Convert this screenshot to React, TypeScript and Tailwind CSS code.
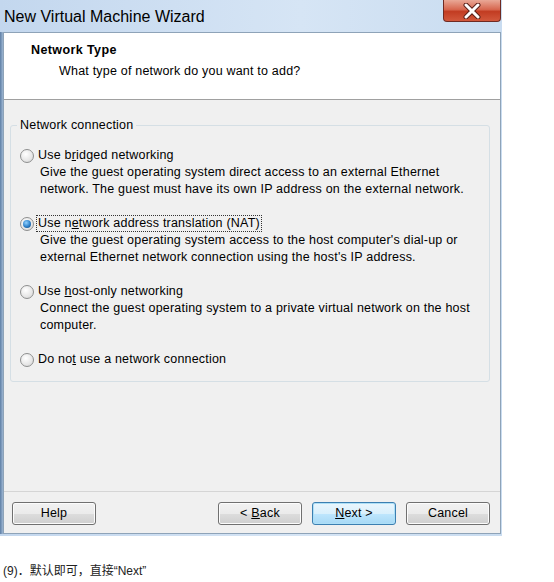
import type { ReactNode } from 'react';

const Radio = ({ checked }: { checked?: boolean }) => (
  <span className="flex size-[14px] shrink-0 items-center justify-center rounded-full border border-[#8e8f8f] bg-[radial-gradient(circle_at_40%_35%,#ffffff,#e6e6e6_60%,#cfcfcf)]">
    {checked && (
      <span className="size-[8px] rounded-full bg-[radial-gradient(circle_at_40%_35%,#8fd0ff,#2d80c8_55%,#0e3f73)]" />
    )}
  </span>
);

const Option = ({
  label,
  desc,
  checked,
  focused,
}: {
  label: ReactNode;
  desc?: string[];
  checked?: boolean;
  focused?: boolean;
}) => (
  <div className="flex flex-col">
    <div className="flex h-[17px] items-center">
      <Radio checked={checked} />
      <span
        className={
          focused
            ? 'ml-[3px] px-[1px] leading-[15px] outline-1 outline-dotted outline-[#333]'
            : 'ml-[4px] leading-[17px]'
        }
      >
        {label}
      </span>
    </div>
    {desc && (
      <div className="pl-[20px] leading-[17px]">
        {desc.map((line) => (
          <div key={line}>{line}</div>
        ))}
      </div>
    )}
  </div>
);

const Button = ({ children, focused }: { children: ReactNode; focused?: boolean }) => (
  <button
    className={
      focused
        ? 'h-[23px] w-[84px] rounded-[3px] border border-[#3c7fb1] bg-[linear-gradient(to_bottom,#eaf6fd_0%,#d9f0fc_50%,#bee6fd_51%,#a7d9f5_100%)] text-black shadow-[inset_0_0_0_1px_#aee0f7]'
        : 'h-[23px] w-[84px] rounded-[3px] border border-[#707070] bg-[linear-gradient(to_bottom,#f2f2f2_0%,#ebebeb_50%,#dddddd_51%,#cfcfcf_100%)] text-black shadow-[inset_0_0_0_1px_#fcfcfc]'
    }
  >
    {children}
  </button>
);

export default function App() {
  return (
    <div className="h-[582px] w-[554px] bg-white font-['Liberation_Sans',Arial,sans-serif] text-[12.5px] tracking-[0.2px] text-[#111]">
      <div className="flex h-[536px] w-[502px] flex-col bg-[linear-gradient(to_right,#c3d7ee,#d6e5f5_60%,#c9dcf0)]">
        {/* title bar */}
        <div className="flex h-[32px] items-start">
          <span className="pl-[4px] pt-[7px] text-[16px] leading-[20px] tracking-normal text-black">New Virtual Machine Wizard</span>
          <div className="ml-auto mr-[1px] flex h-[22px] w-[58px] items-center justify-center rounded-b-[4px] border border-t-0 border-[#6f2a22] bg-[linear-gradient(to_bottom,#e9a896,#d7674f_45%,#c23c22_55%,#d2583c)]">
            <svg width="20" height="16" viewBox="0 0 20 16">
              <path
                d="M4 2 L16 14 M16 2 L4 14"
                stroke="#5a2018"
                strokeWidth="5"
                fill="none"
                strokeLinecap="round"
              />
              <path
                d="M4 2 L16 14 M16 2 L4 14"
                stroke="#ffffff"
                strokeWidth="3"
                fill="none"
                strokeLinecap="round"
              />
            </svg>
          </div>
        </div>

        <div className="flex flex-1">
          <div className="w-[3px] bg-[linear-gradient(to_right,#5e7fa6,#9db6d2)]" />
          <div className="flex flex-1 flex-col border border-[#8ea3b8] bg-[#f0f0f0]">
            {/* header */}
            <div className="h-[67px] border-b border-[#a0a0a0] bg-white pl-[27px] pt-[9px]">
              <div className="font-bold leading-[17px] tracking-[0.4px] text-black">Network Type</div>
              <div className="mt-[4px] pl-[28px] leading-[17px] text-black">What type of network do you want to add?</div>
            </div>

            {/* body */}
            <div className="flex flex-1 flex-col px-[6px] pt-[17px]">
              <fieldset className="h-[265px] w-[480px] rounded-[3px] border border-[#d5dfe5]">
                <legend className="ml-[6px] px-[3px] leading-[17px] text-black">Network connection</legend>
                <div className="flex flex-col gap-[17px] pl-[9px] pt-[13px] text-black">
                  <Option
                    label={
                      <>
                        Use b<u>r</u>idged networking
                      </>
                    }
                    desc={[
                      'Give the guest operating system direct access to an external Ethernet',
                      'network. The guest must have its own IP address on the external network.',
                    ]}
                  />
                  <Option
                    checked
                    focused
                    label={
                      <>
                        Use n<u>e</u>twork address translation (NAT)
                      </>
                    }
                    desc={[
                      "Give the guest operating system access to the host computer's dial-up or",
                      "external Ethernet network connection using the host's IP address.",
                    ]}
                  />
                  <Option
                    label={
                      <>
                        Use <u>h</u>ost-only networking
                      </>
                    }
                    desc={[
                      'Connect the guest operating system to a private virtual network on the host',
                      'computer.',
                    ]}
                  />
                  <Option
                    label={
                      <>
                        Do no<u>t</u> use a network connection
                      </>
                    }
                  />
                </div>
              </fieldset>
            </div>

            {/* footer */}
            <div className="flex h-[42px] items-start border-t border-[#d5d5d5] pl-[8px] pt-[10px]">
              <Button>Help</Button>
              <div className="ml-auto flex gap-[10px] pr-[10px]">
                <Button>
                  &lt; <u>B</u>ack
                </Button>
                <Button focused>
                  <u>N</u>ext &gt;
                </Button>
                <Button>Cancel</Button>
              </div>
            </div>
          </div>
          <div className="w-[1px]" />
        </div>
        <div className="h-[2px]" />
      </div>

      <div className="pl-[3px] pt-[27px] font-['Liberation_Sans','Noto_Sans_CJK_SC',sans-serif] text-[12px] leading-[17px] tracking-normal text-[#222]">
        (9)．默认即可，直接“Next”
      </div>
    </div>
  );
}
